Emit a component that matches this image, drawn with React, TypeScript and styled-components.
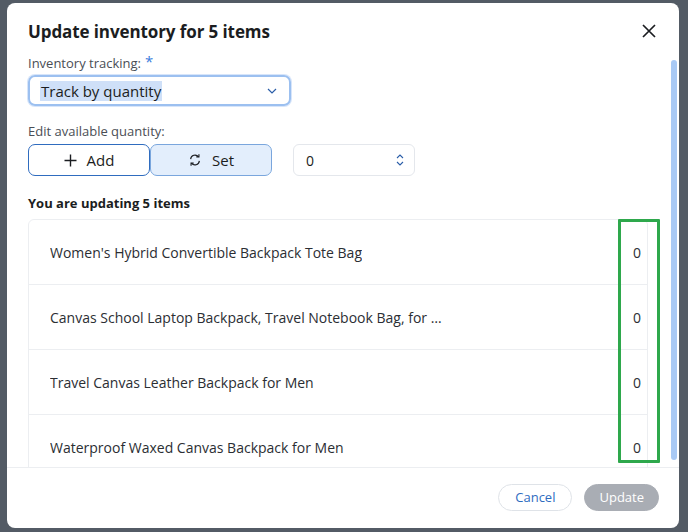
import React from "react";
import styled, { createGlobalStyle } from "styled-components";

const Global = createGlobalStyle`
  html, body { margin: 0; padding: 0; background: #4f5660; }
  body { font-family: "Open Sans", "Noto Sans", sans-serif; color: #1b1d21; }
`;

const Backdrop = styled.div`
  width: 688px; height: 532px; box-sizing: border-box;
  padding: 3px 9px 4px 7px; background: #535b65;
  display: flex; overflow: hidden;
`;
const Modal = styled.div`
  flex: 1; background: #fff; border-radius: 8px;
  display: flex; flex-direction: column; position: relative; overflow: hidden;
`;
const Header = styled.div`
  display: flex; justify-content: space-between; align-items: center;
  padding: 15px 20px 0 21px; height: 26px;
`;
const Title = styled.h1`
  margin: 0; font-size: 17px; font-weight: 700; letter-spacing: -0.1px;
`;
const Close = styled.button`
  border: none; background: none; padding: 0; width: 20px; height: 20px;
  display: flex; align-items: center; justify-content: center; cursor: pointer;
`;
const Body = styled.div`
  flex: 1; padding: 0 30px 0 21px; overflow: hidden; position: relative;
`;
const Label = styled.div<{ $top: number }>`
  font-size: 13px; color: #4a4e55; margin-top: ${p => p.$top}px; height: 18px;
`;
const Star = styled.span` color: #3b7ddd; font-size: 15px; margin-left: 4px; vertical-align: top; position: relative; top: -3px; `;
const Select = styled.div`
  margin-top: 3px; width: 263px; height: 31px; box-sizing: border-box;
  border: 2px solid #9cc0f0; border-radius: 7px;
  display: flex; align-items: center; justify-content: space-between; padding: 0 12px 0 10px;
  box-shadow: 0 0 0 1px #d7e5fa;
`;
const Selected = styled.span` background: #cfe0f8; font-size: 15px; padding: 0 1px; `;
const Row = styled.div` display: flex; align-items: center; margin-top: 4px; `;
const Toggle = styled.button<{ $active?: boolean }>`
  width: 122px; height: 32px; box-sizing: border-box; border-radius: 7px;
  border: 1.5px solid ${p => (p.$active ? "#7aa6dd" : "#2f6cbf")};
  background: ${p => (p.$active ? "#e3eefc" : "#fff")};
  font-family: inherit; font-size: 15px; color: #1b1d21;
  display: flex; align-items: center; justify-content: center; gap: 10px;
`;
const NumberBox = styled.div`
  margin-left: 21px; width: 122px; height: 32px; box-sizing: border-box;
  border: 1px solid #e4e7ec; border-radius: 6px; display: flex; align-items: center;
  justify-content: space-between; padding: 0 10px 0 12px; font-size: 14px;
`;
const Spin = styled.div` display: flex; flex-direction: column; gap: 2px; `;
const Subtitle = styled.div` margin-top: 18px; font-size: 13px; font-weight: 700; `;
const Table = styled.div`
  margin-top: 7px; border: 1px solid #eceef1; border-radius: 6px 6px 0 0; width: 620px;
  box-sizing: border-box;
`;
const ItemRow = styled.div`
  height: 64px; display: flex; align-items: center; justify-content: space-between;
  border-bottom: 1px solid #eceef1; padding: 0 0 0 21px; font-size: 14px; color: #2b2e33;
`;
const Qty = styled.div`
  width: 30px; align-self: stretch; display: flex; align-items: center; justify-content: flex-end;
  padding-right: 6px;
`;
const Name = styled.span` max-width: 400px; white-space: nowrap; overflow: hidden; text-overflow: ellipsis; `;
const Highlight = styled.div`
  position: absolute; left: 611px; top: 175px; width: 36px; height: 238px;
  border: 3px solid #2ea84c; border-radius: 1px;
`;
const ScrollThumb = styled.div`
  position: absolute; right: 2px; top: 57px; width: 6px; height: 400px;
  background: #a8c9f5; border-radius: 3px;
`;
const Footer = styled.div`
  height: 58px; border-top: 1px solid #eceef1; display: flex; justify-content: flex-end;
  align-items: center; gap: 12px; padding: 0 20px 2px 0;
`;
const Pill = styled.button<{ $primary?: boolean }>`
  height: 27px; border-radius: 14px; font-family: inherit; font-size: 13px; line-height: 1;
  padding: 0 ${p => (p.$primary ? 14 : 16)}px;
  border: 1px solid ${p => (p.$primary ? "#a9adb4" : "#dfe3e8")};
  background: ${p => (p.$primary ? "#a9adb4" : "#fff")};
  color: ${p => (p.$primary ? "#fff" : "#2f6cbf")};
`;

const items = [
  "Women's Hybrid Convertible Backpack Tote Bag",
  "Canvas School Laptop Backpack, Travel Notebook Bag, for Women and Men",
  "Travel Canvas Leather Backpack for Men",
  "Waterproof Waxed Canvas Backpack for Men",
  "Vintage Leather Backpack",
];

export default function App() {
  return (
    <>
      <Global />
      <Backdrop>
        <Modal>
          <Header>
            <Title>Update inventory for 5 items</Title>
            <Close aria-label="Close">
              <svg width="14" height="14" viewBox="0 0 14 14"><path d="M1 1L13 13M13 1L1 13" stroke="#1b1d21" strokeWidth="1.7" /></svg>
            </Close>
          </Header>
          <Body>
            <Label $top={10}>Inventory tracking:<Star>*</Star></Label>
            <Select>
              <Selected>Track by quantity</Selected>
              <svg width="10" height="6" viewBox="0 0 10 6"><path d="M1 1l4 4 4-4" fill="none" stroke="#2b5ea8" strokeWidth="1.2" /></svg>
            </Select>
            <Label $top={16}>Edit available quantity:</Label>
            <Row>
              <Toggle>
                <svg width="13" height="13" viewBox="0 0 13 13"><path d="M6.5 0.5v12M0.5 6.5h12" stroke="#1b1d21" strokeWidth="1.4" /></svg>
                Add
              </Toggle>
              <Toggle $active>
                <svg width="14" height="14" viewBox="0 0 16 16" fill="none" stroke="#1b1d21" strokeWidth="1.3">
                  <path d="M3 7a5 5 0 0 1 9-2.5M13 9a5 5 0 0 1-9 2.5" />
                  <path d="M12.5 1.5v3h-3M3.5 14.5v-3h3" />
                </svg>
                Set
              </Toggle>
              <NumberBox>
                0
                <Spin>
                  <svg width="8" height="5" viewBox="0 0 8 5"><path d="M1 4l3-3 3 3" fill="none" stroke="#2b5ea8" strokeWidth="1.1" /></svg>
                  <svg width="8" height="5" viewBox="0 0 8 5"><path d="M1 1l3 3 3-3" fill="none" stroke="#2b5ea8" strokeWidth="1.1" /></svg>
                </Spin>
              </NumberBox>
            </Row>
            <Subtitle>You are updating 5 items</Subtitle>
            <Table>
              {items.map((n) => (
                <ItemRow key={n}>
                  <Name>{n}</Name>
                  <Qty>0</Qty>
                </ItemRow>
              ))}
            </Table>
            <Highlight />
          </Body>
          <ScrollThumb />
          <Footer>
            <Pill>Cancel</Pill>
            <Pill $primary>Update</Pill>
          </Footer>
        </Modal>
      </Backdrop>
    </>
  );
}
